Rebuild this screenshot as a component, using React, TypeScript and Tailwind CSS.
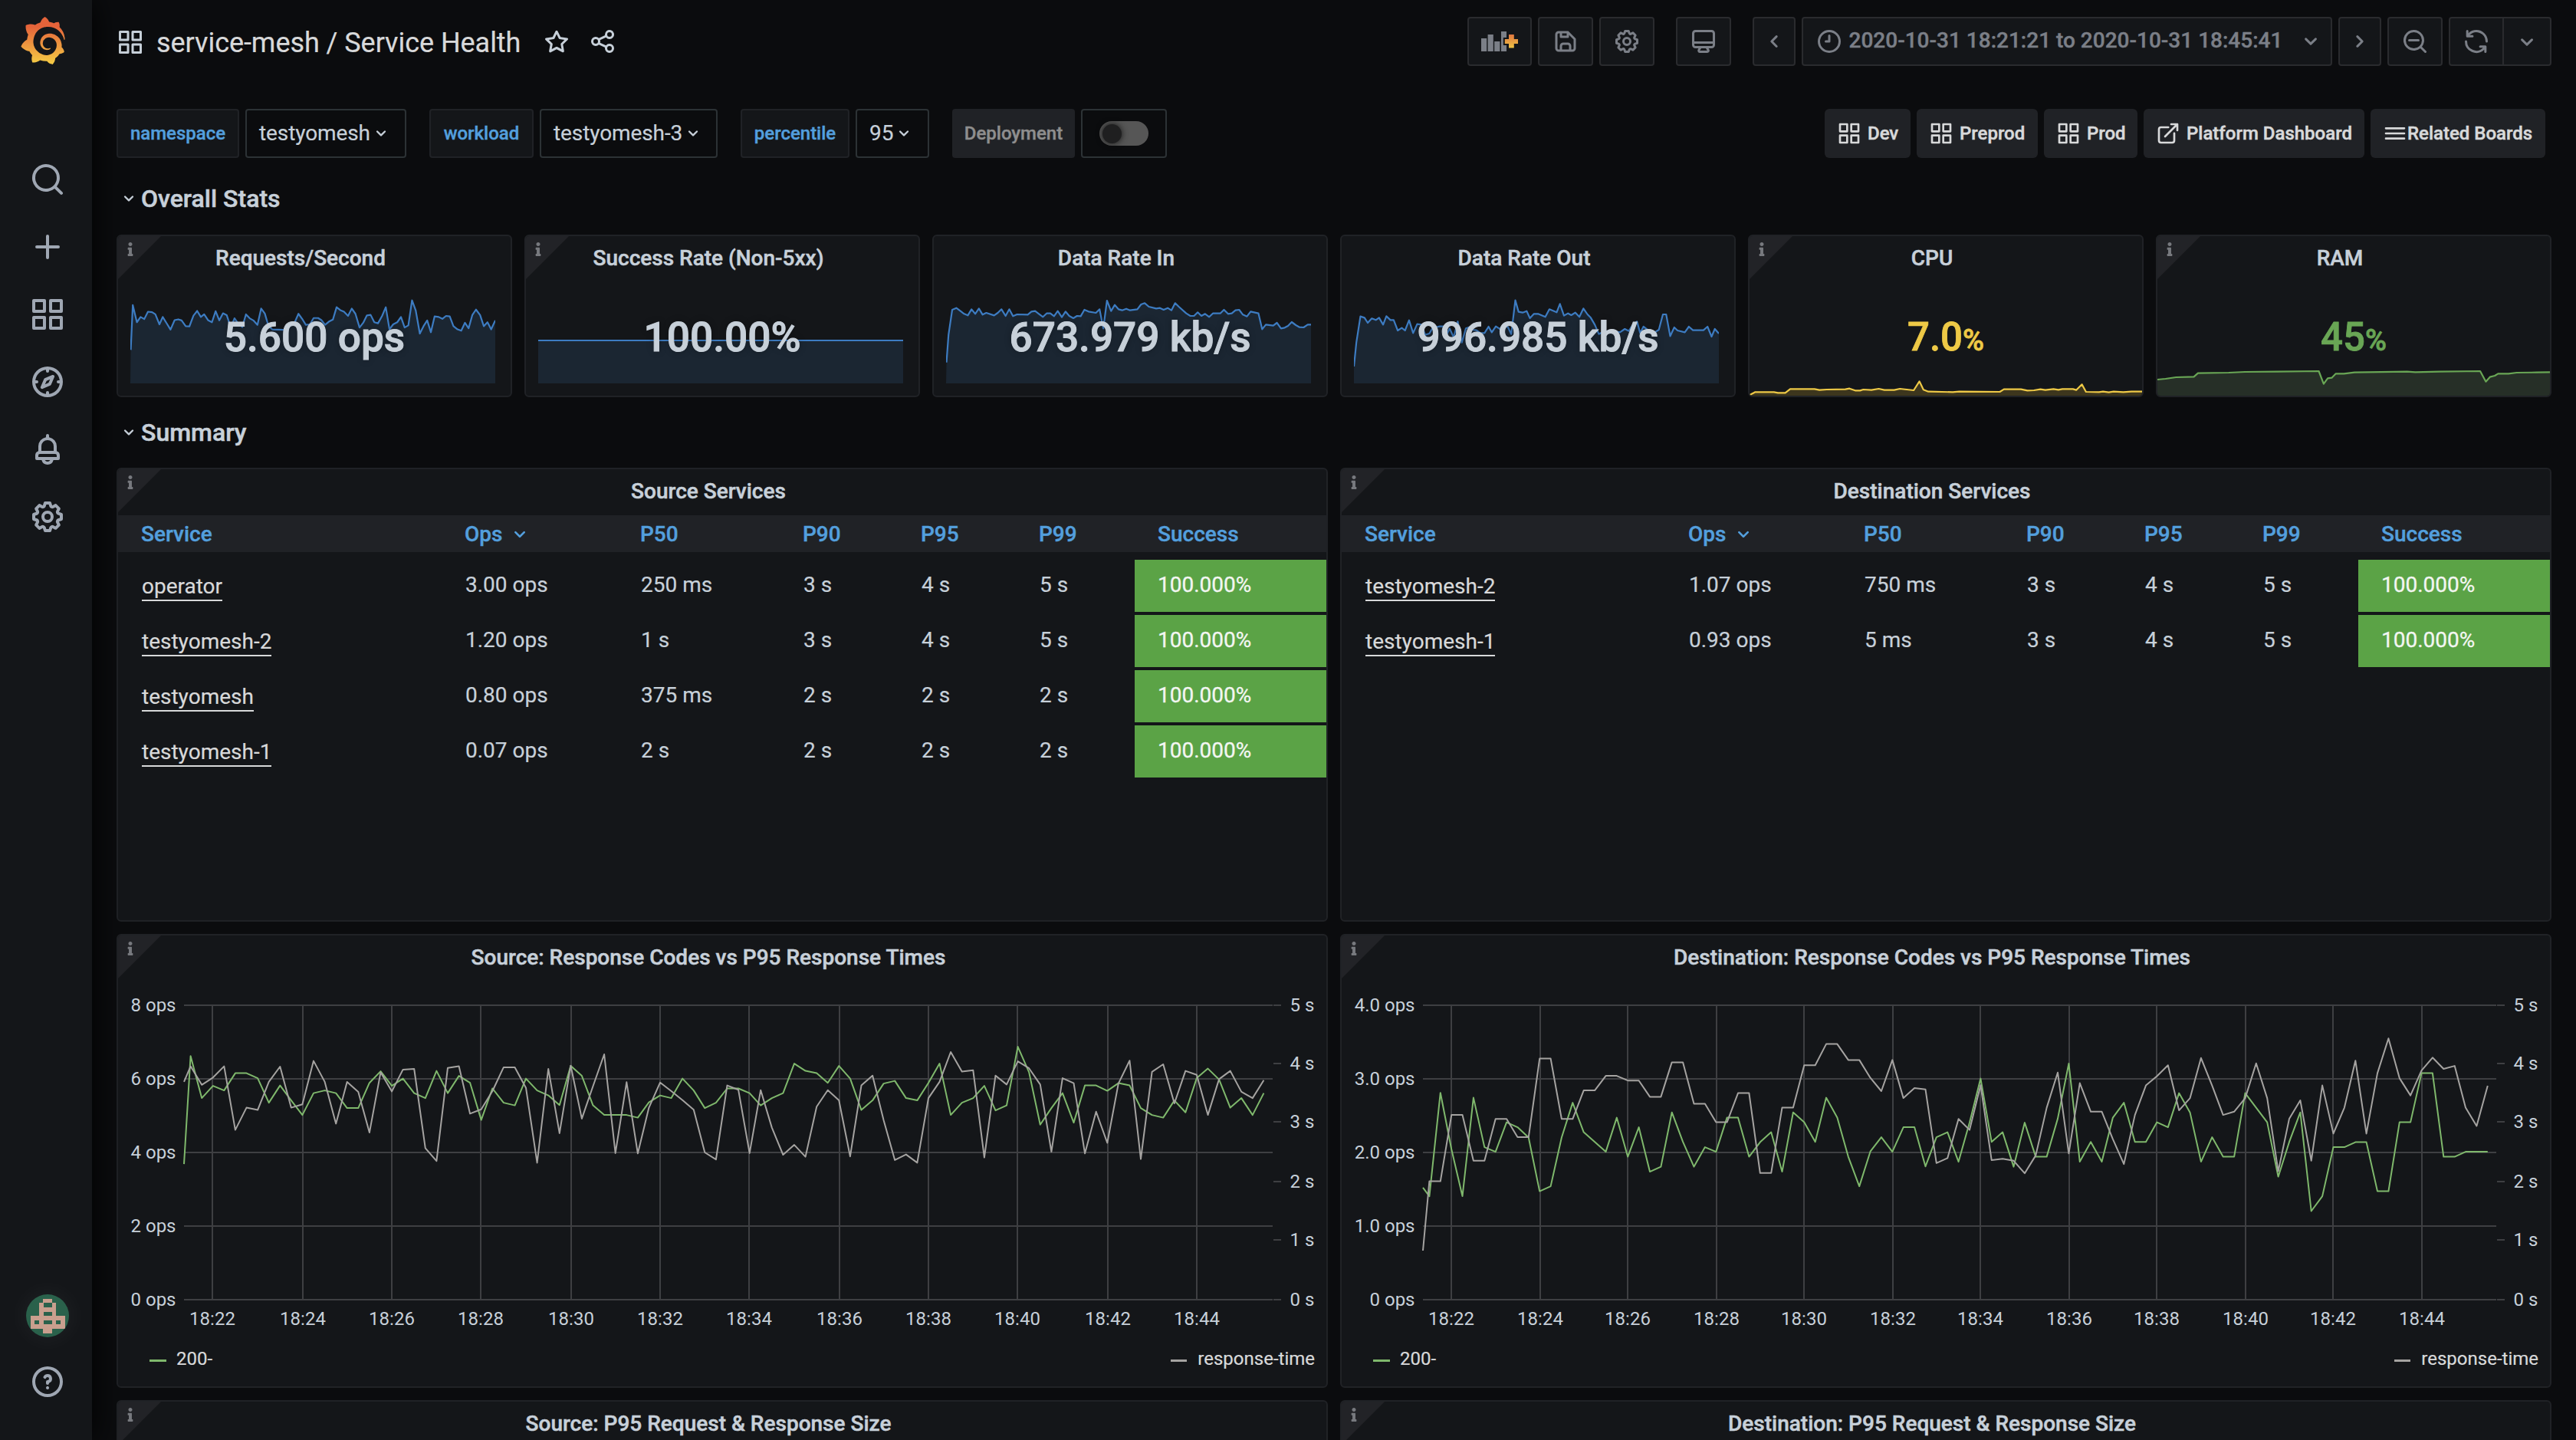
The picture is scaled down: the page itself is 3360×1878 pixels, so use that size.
import React from 'react';
import { SiGrafana } from 'react-icons/si';
import { FaInfo } from 'react-icons/fa';

const ICONS = {
  apps: 'M10,13H3a1,1,0,0,0-1,1v7a1,1,0,0,0,1,1h7a1,1,0,0,0,1-1V14A1,1,0,0,0,10,13ZM9,20H4V15H9ZM21,2H14a1,1,0,0,0-1,1v7a1,1,0,0,0,1,1h7a1,1,0,0,0,1-1V3A1,1,0,0,0,21,2ZM20,9H15V4h5Zm1,4H14a1,1,0,0,0-1,1v7a1,1,0,0,0,1,1h7a1,1,0,0,0,1-1V14A1,1,0,0,0,21,13Zm-1,7H15V15h5ZM10,2H3A1,1,0,0,0,2,3v7a1,1,0,0,0,1,1h7a1,1,0,0,0,1-1V3A1,1,0,0,0,10,2ZM9,9H4V4H9Z',
  search:
    'M21.71,20.29,18,16.61A9,9,0,1,0,16.61,18l3.68,3.68a1,1,0,0,0,1.42,0A1,1,0,0,0,21.71,20.29ZM11,18a7,7,0,1,1,7-7A7,7,0,0,1,11,18Z',
  plus: 'M19,11H13V5a1,1,0,0,0-2,0v6H5a1,1,0,0,0,0,2h6v6a1,1,0,0,0,2,0V13h6a1,1,0,0,0,0-2Z',
  compass:
    'M12,2A10,10,0,1,0,22,12,10,10,0,0,0,12,2Zm1,17.93V19a1,1,0,0,0-2,0v.93A8,8,0,0,1,4.07,13H5a1,1,0,0,0,0-2H4.07A8,8,0,0,1,11,4.07V5a1,1,0,0,0,2,0V4.07A8,8,0,0,1,19.93,11H19a1,1,0,0,0,0,2h.93A8,8,0,0,1,13,19.93ZM15.14,7.55l-5,2.12a1,1,0,0,0-.52.52l-2.12,5a1,1,0,0,0,.21,1.1,1,1,0,0,0,.7.3.93.93,0,0,0,.4-.09l5-2.12a1,1,0,0,0,.52-.52l2.12-5a1,1,0,0,0-1.31-1.31Zm-2.49,5.1-2.28,1,1-2.28,2.28-1Z',
  bell: 'M18,13.18V10a6,6,0,0,0-5-5.91V3a1,1,0,0,0-2,0V4.09A6,6,0,0,0,6,10v3.18A3,3,0,0,0,4,16v2a1,1,0,0,0,1,1H8.14a4,4,0,0,0,7.72,0H19a1,1,0,0,0,1-1V16A3,3,0,0,0,18,13.18ZM8,10a4,4,0,0,1,8,0v3H8Zm4,10a2,2,0,0,1-1.72-1h3.44A2,2,0,0,1,12,20Zm6-3H6V16a1,1,0,0,1,1-1H17a1,1,0,0,1,1,1Z',
  cog: 'M21.32,9.55l-1.89-.63.89-1.78A1,1,0,0,0,20.13,6L18,3.87a1,1,0,0,0-1.15-.19l-1.78.89-.63-1.89A1,1,0,0,0,13.5,2h-3a1,1,0,0,0-.95.68L8.92,4.57,7.14,3.68A1,1,0,0,0,6,3.87L3.87,6a1,1,0,0,0-.19,1.15l.89,1.78-1.89.63A1,1,0,0,0,2,10.5v3a1,1,0,0,0,.68.95l1.89.63-.89,1.78A1,1,0,0,0,3.87,18L6,20.13a1,1,0,0,0,1.15.19l1.78-.89.63,1.89a1,1,0,0,0,.95.68h3a1,1,0,0,0,.95-.68l.63-1.89,1.78.89A1,1,0,0,0,18,20.13L20.13,18a1,1,0,0,0,.19-1.15l-.89-1.78,1.89-.63A1,1,0,0,0,22,13.5v-3A1,1,0,0,0,21.32,9.55ZM20,12.78l-1.2.4A2,2,0,0,0,17.64,16l.57,1.14-1.1,1.1L16,17.64a2,2,0,0,0-2.79,1.16l-.4,1.2H11.22l-.4-1.2A2,2,0,0,0,8,17.64l-1.14.57-1.1-1.1L6.36,16A2,2,0,0,0,5.2,13.18L4,12.78V11.22l1.2-.4A2,2,0,0,0,6.36,8L5.79,6.89l1.1-1.1L8,6.36A2,2,0,0,0,10.82,5.2l.4-1.2h1.56l.4,1.2A2,2,0,0,0,16,6.36l1.14-.57,1.1,1.1L17.64,8a2,2,0,0,0,1.16,2.79l1.2.4ZM12,8a4,4,0,1,0,4,4A4,4,0,0,0,12,8Zm0,6a2,2,0,1,1,2-2A2,2,0,0,1,12,14Z',
  help: 'M11.29,15.29a1.58,1.58,0,0,0-.12.15.76.76,0,0,0-.09.18.64.64,0,0,0-.06.18,1.36,1.36,0,0,0,0,.2.84.84,0,0,0,.08.38.9.9,0,0,0,.54.54.94.94,0,0,0,.76,0,.9.9,0,0,0,.54-.54A1,1,0,0,0,13,16a1,1,0,0,0-.29-.71A1,1,0,0,0,11.29,15.29ZM12,2A10,10,0,1,0,22,12,10,10,0,0,0,12,2Zm0,18a8,8,0,1,1,8-8A8,8,0,0,1,12,20ZM12,7A3,3,0,0,0,9.4,8.5a1,1,0,1,0,1.73,1A1,1,0,0,1,12,9a1,1,0,0,1,0,2,1,1,0,0,0-1,1v1a1,1,0,0,0,2,0v-.18A3,3,0,0,0,12,7Z',
  save: 'M20.71,9.29l-6-6a1,1,0,0,0-.32-.21A1.09,1.09,0,0,0,14,3H6A3,3,0,0,0,3,6V18a3,3,0,0,0,3,3H18a3,3,0,0,0,3-3V10A1,1,0,0,0,20.71,9.29ZM9,5h4V7H9Zm6,14H9V16a1,1,0,0,1,1-1h4a1,1,0,0,1,1,1Zm4-1a1,1,0,0,1-1,1H17V16a3,3,0,0,0-3-3H10a3,3,0,0,0-3,3v3H6a1,1,0,0,1-1-1V6A1,1,0,0,1,6,5H7V8A1,1,0,0,0,8,9h6a1,1,0,0,0,1-1V6.41l4,4Z',
  sync: 'M19.91,15.51H15.38a1,1,0,0,0,0,2h2.4A8,8,0,0,1,4,12a1,1,0,0,0-2,0,10,10,0,0,0,16.88,7.23V21a1,1,0,0,0,2,0V16.5A1,1,0,0,0,19.91,15.51ZM12,2A10,10,0,0,0,5.12,4.77V3a1,1,0,0,0-2,0V7.5a1,1,0,0,0,1,1h4.5a1,1,0,0,0,0-2H6.22A8,8,0,0,1,20,12a1,1,0,0,0,2,0A10,10,0,0,0,12,2Z',
  share:
    'M18,14a4,4,0,0,0-3.08,1.48l-5.1-2.35a3.64,3.64,0,0,0,0-2.26l5.1-2.35A4,4,0,1,0,14,6a4.17,4.17,0,0,0,.07.71L8.79,9.14a4,4,0,1,0,0,5.72l5.28,2.43A4.17,4.17,0,0,0,14,18a4,4,0,1,0,4-4ZM18,4a2,2,0,1,1-2,2A2,2,0,0,1,18,4ZM6,14a2,2,0,1,1,2-2A2,2,0,0,1,6,14Zm12,6a2,2,0,1,1,2-2A2,2,0,0,1,18,20Z',
  star: 'M22,9.67A1,1,0,0,0,21.14,9l-5.69-.83L12.9,3a1,1,0,0,0-1.8,0L8.55,8.16,2.86,9a1,1,0,0,0-.81.68,1,1,0,0,0,.25,1l4.13,4-1,5.68A1,1,0,0,0,6.9,21.44L12,18.77l5.1,2.67a.93.93,0,0,0,.46.12,1,1,0,0,0,.59-.19,1,1,0,0,0,.4-1l-1-5.68,4.13-4A1,1,0,0,0,22,9.67Zm-6.15,4a1,1,0,0,0-.29.88l.72,4.19-3.76-2a1.06,1.06,0,0,0-.94,0l-3.76,2,.72-4.19a1,1,0,0,0-.29-.88l-3-3,4.21-.61a1,1,0,0,0,.76-.55L12,5.7l1.88,3.82a1,1,0,0,0,.76.55l4.21.61Z',
  monitor:
    'M19,2H5A3,3,0,0,0,2,5V15a3,3,0,0,0,3,3H7.64l-.58,1a2,2,0,0,0,0,2,2,2,0,0,0,1.75,1h6.46A2,2,0,0,0,17,21a2,2,0,0,0,0-2l-.59-1H19a3,3,0,0,0,3-3V5A3,3,0,0,0,19,2ZM8.77,20,10,18H14l1.2,2ZM20,15a1,1,0,0,1-1,1H5a1,1,0,0,1-1-1V14H20Zm0-3H4V5A1,1,0,0,1,5,4H19a1,1,0,0,1,1,1Z',
  clock:
    'M12,2A10,10,0,1,0,22,12,10,10,0,0,0,12,2Zm0,18a8,8,0,1,1,8-8A8,8,0,0,1,12,20ZM12,6a1,1,0,0,0-1,1v4H9a1,1,0,0,0,0,2h3a1,1,0,0,0,1-1V7A1,1,0,0,0,12,6Z',
  zoomOut:
    'M21.71,20.29,18,16.61A9,9,0,1,0,16.61,18l3.68,3.68a1,1,0,0,0,1.42,0A1,1,0,0,0,21.71,20.29ZM11,18a7,7,0,1,1,7-7A7,7,0,0,1,11,18Zm4-8H7a1,1,0,0,0,0,2h8a1,1,0,0,0,0-2Z',
  external:
    'M18,10.82a1,1,0,0,0-1,1V19a1,1,0,0,1-1,1H5a1,1,0,0,1-1-1V8A1,1,0,0,1,5,7h7.18a1,1,0,0,0,0-2H5A3,3,0,0,0,2,8V19a3,3,0,0,0,3,3H16a3,3,0,0,0,3-3V11.82A1,1,0,0,0,18,10.82Zm3.92-8.2a1,1,0,0,0-.54-.54A1,1,0,0,0,21,2H15a1,1,0,0,0,0,2h3.59L8.29,14.29a1,1,0,0,0,0,1.42,1,1,0,0,0,1.42,0L20,5.41V9a1,1,0,0,0,2,0V3A1,1,0,0,0,21.92,2.62Z',
  bars: 'M3,8H21a1,1,0,0,0,0-2H3A1,1,0,0,0,3,8Zm18,8H3a1,1,0,0,0,0,2H21a1,1,0,0,0,0-2Zm0-5H3a1,1,0,0,0,0,2H21a1,1,0,0,0,0-2Z',
  down: 'M17,9.17a1,1,0,0,0-1.41,0L12,12.71,8.46,9.17a1,1,0,0,0-1.41,0,1,1,0,0,0,0,1.42l4.24,4.24a1,1,0,0,0,1.42,0L17,10.59A1,1,0,0,0,17,9.17Z',
  left: 'M11.29,12l3.54-3.54a1,1,0,0,0,0-1.41,1,1,0,0,0-1.42,0L9.17,11.29a1,1,0,0,0,0,1.42L13.41,17a1,1,0,0,0,.71.29,1,1,0,0,0,.71-.29,1,1,0,0,0,0-1.41Z',
  right:
    'M14.83,11.29,10.59,7.05a1,1,0,0,0-1.42,0,1,1,0,0,0,0,1.41L12.71,12,9.17,15.54a1,1,0,0,0,0,1.41,1,1,0,0,0,.71.29,1,1,0,0,0,.71-.29l4.24-4.24A1,1,0,0,0,14.83,11.29Z',
};

function Icon({ name, className }: { name: keyof typeof ICONS; className: string }) {
  return (
    <svg viewBox="0 0 24 24" fill="currentColor" className={`shrink-0 ${className}`}>
      <path d={ICONS[name]} />
    </svg>
  );
}

const AVATAR = [
  '..........',
  '....##....',
  '...#..#...',
  '...####...',
  '...#..#...',
  '.########.',
  '.#.#..#.#.',
  '.########.',
  '....##....',
  '..........',
];

function Sidebar() {
  const items: (keyof typeof ICONS)[] = ['search', 'plus', 'apps', 'compass', 'bell', 'cog'];
  return (
    <aside className="relative z-10 flex h-full w-[120px] shrink-0 flex-col items-center bg-[#141619] pl-[4px] text-[#9fa7b3] shadow-[0_0_40px_#000]">
      <svg className="h-0 w-0">
        <defs>
          <linearGradient id="logo" x1="0" y1="0" x2="0" y2="1">
            <stop offset="0.2" stopColor="#e5633a" />
            <stop offset="0.95" stopColor="#f3c644" />
          </linearGradient>
        </defs>
      </svg>
      <SiGrafana className="mt-[22px] mr-[12px] h-[62px] w-[62px]" fill="url(#logo)" />
      <nav className="mt-[126px] flex flex-col gap-[40px]">
        {items.map((n) => (
          <Icon key={n} name={n} className="h-[48px] w-[48px]" />
        ))}
      </nav>
      <div className="mt-auto mb-[52px] flex flex-col items-center gap-[34px]">
        <svg viewBox="0 0 10 10" shapeRendering="crispEdges" className="h-[56px] w-[56px] rounded-full bg-[#2a614b] shadow-[0_0_28px_6px_rgba(255,255,255,0.04)]">
          {AVATAR.flatMap((row, y) =>
            row.split('').map((c, x) => (c === '#' ? <rect key={`${x}-${y}`} x={x} y={y} width="1.02" height="1.02" fill="#c99f8e" /> : null)),
          )}
        </svg>
        <Icon name="help" className="h-[48px] w-[48px]" />
      </div>
    </aside>
  );
}

const BTN = 'flex h-[64px] items-center justify-center rounded-[4px] border-2 border-[#2a2b2e] bg-[#141619] text-[#7b7f87]';

function Header() {
  return (
    <header className="flex h-[64px] shrink-0 items-center justify-between">
      <div className="flex items-center text-[#c7d0d9]">
        <Icon name="apps" className="mt-[2px] h-[36px] w-[36px]" />
        <h1 className="ml-[16px] w-[476px] whitespace-nowrap pt-[3px] text-[36px] leading-[44px] tracking-[-0.05px] text-[#d8d9da]">
          service-mesh / Service Health
        </h1>
        <Icon name="star" className="ml-[28px] h-[36px] w-[36px]" />
        <Icon name="share" className="ml-[24px] h-[36px] w-[36px]" />
      </div>
      <div className="flex gap-[8px]">
        <div className={`${BTN} w-[84px]`}>
          <svg viewBox="0 0 48 26" className="h-[26px] w-[48px]" fill="currentColor">
            <defs>
              <linearGradient id="add" x1="0" y1="0" x2="0" y2="1">
                <stop offset="0" stopColor="#e0763f" />
                <stop offset="1" stopColor="#efc445" />
              </linearGradient>
            </defs>
            <path d="M0 9h7.200v17H0zM8.600 4h7.200v22H8.600zM17.200 13h7.200v13h-7.200zM26 0h7v26h-7z" />
            <path d="M36 4h6.800v6h5.200v6h-5.200v5.600H36V16h-5.200v-6H36z" stroke="#141619" strokeWidth="4" />
            <path d="M36 4h6.800v6h5.200v6h-5.200v5.600H36V16h-5.200v-6H36z" fill="url(#add)" />
          </svg>
        </div>
        <div className={`${BTN} w-[72px]`}>
          <Icon name="save" className="h-[36px] w-[36px]" />
        </div>
        <div className={`${BTN} w-[72px]`}>
          <Icon name="cog" className="h-[36px] w-[36px]" />
        </div>
        <div className={`${BTN} mx-[20px] w-[72px]`}>
          <Icon name="monitor" className="h-[36px] w-[36px]" />
        </div>
        <div className={`${BTN} w-[56px]`}>
          <Icon name="left" className="h-[36px] w-[36px]" />
        </div>
        <div className={`${BTN} w-[692px] pl-[7px] text-[28px] font-medium`}>
          <Icon name="clock" className="h-[36px] w-[36px]" />
          <span className="ml-[8px] w-[562px] whitespace-nowrap pb-[2px] [-webkit-text-stroke:0.4px]">2020-10-31 18:21:21 to 2020-10-31 18:45:41</span>
          <Icon name="down" className="ml-[22px] h-[36px] w-[36px]" />
        </div>
        <div className={`${BTN} w-[56px]`}>
          <Icon name="right" className="h-[36px] w-[36px]" />
        </div>
        <div className={`${BTN} w-[72px]`}>
          <Icon name="zoomOut" className="h-[36px] w-[36px]" />
        </div>
        <div className={`${BTN} w-[134px]`}>
          <div className="flex h-full flex-1 items-center justify-center border-r-2 border-[#2a2b2e]">
            <Icon name="sync" className="h-[36px] w-[36px]" />
          </div>
          <div className="flex h-full w-[60px] items-center justify-center pt-[2px]">
            <Icon name="down" className="h-[36px] w-[36px]" />
          </div>
        </div>
      </div>
    </header>
  );
}

function VarLabel({ text, w }: { text: string; w: string }) {
  return (
    <div className={`flex h-[64px] items-center justify-center rounded-[4px] border-2 border-[#202226] bg-[#141619] text-[24px] font-medium text-[#539fdd] [-webkit-text-stroke:0.4px] ${w}`}>
      {text}
    </div>
  );
}

function VarSelect({ text, w }: { text: string; w: string }) {
  return (
    <div className={`ml-[8px] mr-[30px] flex h-[64px] items-center rounded-[4px] border-2 border-[#2c3235] bg-[#0b0c0e] pl-[16px] text-[28px] tracking-[-0.1px] text-[#c7d0d9] ${w}`}>
      {text}
      <Icon name="down" className="h-[28px] w-[28px]" />
    </div>
  );
}

function DashLink({ icon, text, w, tight }: { icon: keyof typeof ICONS; text: string; w: string; tight?: boolean }) {
  return (
    <div className={`flex h-[64px] items-center rounded-[6px] bg-[#202226] pl-[16px] text-[24px] font-medium whitespace-nowrap text-[#d8d9da] [-webkit-text-stroke:0.5px] ${w}`}>
      <Icon name={icon} className={tight ? 'h-[32px] w-[32px]' : 'mr-[8px] h-[32px] w-[32px]'} />
      {text}
    </div>
  );
}

function SubMenu() {
  return (
    <div className="mt-[56px] flex h-[64px] shrink-0 justify-between pr-[8px]">
      <div className="flex">
        <VarLabel text="namespace" w="w-[160px]" />
        <VarSelect text="testyomesh" w="w-[210px]" />
        <VarLabel text="workload" w="w-[136px]" />
        <VarSelect text="testyomesh-3" w="w-[232px]" />
        <VarLabel text="percentile" w="w-[142px]" />
        <VarSelect text="95" w="w-[96px]" />
        <div className="flex h-[64px] w-[160px] items-center justify-center rounded-[4px] bg-[#202226] text-[24px] font-medium text-[#8e8e8e] [-webkit-text-stroke:0.4px]">
          Deployment
        </div>
        <div className="ml-[8px] flex h-[64px] w-[112px] items-center justify-center rounded-[4px] border-2 border-[#2c3235]">
          <div className="flex h-[32px] w-[64px] items-center rounded-full bg-[#565656] pl-[4px]">
            <div className="h-[25px] w-[25px] rounded-full bg-[#1f1f20] shadow-[0_0_8px_rgba(0,0,0,0.8)]" />
          </div>
        </div>
      </div>
      <div className="flex gap-[8px]">
        <DashLink icon="apps" text="Dev" w="w-[112px]" />
        <DashLink icon="apps" text="Preprod" w="w-[158px]" />
        <DashLink icon="apps" text="Prod" w="w-[122px]" />
        <DashLink icon="external" text="Platform Dashboard" w="w-[288px]" />
        <DashLink icon="bars" text="Related Boards" w="w-[228px]" tight />
      </div>
    </div>
  );
}

function RowTitle({ text, className }: { text: string; className: string }) {
  return (
    <div className={`flex shrink-0 items-center pl-[2px] text-[32px] font-medium text-[#c7d0d9] [-webkit-text-stroke:0.5px] ${className}`}>
      <Icon name="down" className="mr-[2px] h-[28px] w-[28px]" />
      {text}
    </div>
  );
}

function Panel({ title, info = true, className, children }: { title: string; info?: boolean; className: string; children?: React.ReactNode }) {
  return (
    <section className={`relative flex flex-col overflow-hidden rounded-[6px] border-2 border-[#202226] bg-[#141619] ${className}`}>
      {info && (
        <div className="absolute left-0 top-0 h-[56px] w-[56px] bg-[#222327] pl-[10px] pt-[8px] text-[#77797e] [clip-path:polygon(0_0,100%_0,0_100%)]">
          <FaInfo className="h-[18px] w-[12px]" />
        </div>
      )}
      <h2 className="h-[56px] shrink-0 pr-[36px] text-center text-[28px] leading-[58px] font-medium text-[#c7d0d9] [-webkit-text-stroke:0.5px]">{title}</h2>
      {children}
    </section>
  );
}

const SPARK = {
  rps: '318,1325 323,1155 333,1220 342,1200 351,1208 360,1180 370,1182 378,1190 388,1228 396,1200 406,1225 415,1248 425,1212 434,1209 442,1213 452,1235 461,1236 471,1195 480,1177 489,1200 497,1190 507,1213 516,1220 525,1178 534,1213 543,1186 552,1193 562,1240 571,1205 580,1225 590,1238 599,1190 608,1205 617,1213 627,1230 636,1168 645,1187 654,1235 663,1247 690,1249 700,1245 710,1225 718,1220 727,1188 736,1207 745,1230 755,1228 764,1204 775,1204 783,1212 792,1230 801,1218 811,1210 820,1163 829,1174 838,1180 848,1196 857,1168 866,1188 876,1240 885,1222 894,1194 903,1192 912,1220 921,1224 931,1196 940,1163 949,1247 958,1228 968,1220 977,1200 986,1240 995,1232 1004,1137 1013,1175 1023,1263 1032,1235 1041,1213 1050,1258 1059,1198 1069,1200 1078,1207 1087,1196 1096,1198 1105,1235 1115,1247 1124,1252 1133,1222 1142,1243 1151,1193 1160,1172 1170,1193 1179,1235 1188,1220 1197,1247 1207,1213',
  success: '0,45 100,45',
  rateIn:
    '736,1118 741,1010 750,912 760,905 770,917 779,928 788,934 797,910 806,928 815,907 824,931 833,924 852,934 861,924 870,910 880,936 889,910 898,937 908,930 934,931 943,919 952,917 961,928 971,940 980,926 989,926 998,937 1007,917 1017,941 1026,919 1035,936 1045,945 1054,936 1063,937 1072,912 1082,919 1100,924 1109,910 1118,985 1127,876 1137,917 1146,893 1155,910 1164,914 1174,908 1183,914 1201,910 1210,891 1219,886 1229,900 1247,907 1256,905 1265,912 1275,905 1284,914 1293,886 1302,900 1320,926 1330,936 1339,936 1348,922 1357,936 1366,928 1376,940 1385,926 1403,926 1412,912 1422,928 1431,926 1440,914 1449,912 1458,931 1468,938 1477,919 1496,926 1505,988 1514,970 1532,974 1541,963 1551,985 1560,982 1568,975 1577,960 1587,972 1596,980 1606,981 1616,970 1624,970',
  rateOut:
    '62,594 65,500 70,398 75,403 79,423 84,406 89,412 93,403 98,430 102,397 107,412 111,412 116,453 121,443 125,453 130,413 135,463 140,428 145,430 150,470 155,465 159,443 168,437 172,437 177,465 180,445 185,480 190,418 195,500 200,445 204,440 208,450 213,452 218,463 223,463 228,438 232,460 237,437 242,447 247,435 252,440 256,467 261,335 265,380 270,383 275,377 279,405 284,388 289,388 298,400 303,370 312,382 316,349 321,395 326,386 330,393 335,383 340,400 345,367 350,390 354,403 359,430 364,467 370,457 378,455 384,457 390,460 396,447 401,455 406,430 411,418 415,463 419,438 424,450 433,460 438,450 443,390 447,390 452,475 457,441 461,453 470,460 475,438 480,452 493,452 498,438 503,477 507,447 512,465',
  cpu: '550,706 557,694 580,694 585,697 594,697 600,682 630,682 636,686 645,684 668,683 673,680 680,688 686,688 690,684 700,686 709,681 716,686 728,686 735,681 752,687 759,652 764,685 770,692 800,694 808,692 858,693 863,683 884,683 892,688 900,687 908,683 914,686 924,682 930,685 935,682 948,682 952,686 959,664 964,693 980,694 985,692 992,695 998,692 1010,694 1020,692 1033,692',
  ram: '1052,645 1062,642 1075,636 1097,634 1102,620 1140,618 1160,615 1200,614 1251,612 1257,662 1262,640 1267,638 1272,622 1282,622 1295,617 1360,614 1370,616 1400,614 1450,612 1457,653 1462,635 1468,630 1472,622 1485,622 1495,618 1520,617 1536,616',
};

// box is [left, top, width, height] in the units of the points
function Spark({ points, box, stroke, fill, className }: { points: string; box: [number, number, number, number]; stroke: string; fill: string; className: string }) {
  const [x, y, w, h] = box;
  const base = y + h;
  return (
    <svg viewBox={box.join(' ')} preserveAspectRatio="none" className={className}>
      <polygon points={`${x},${base} ${points} ${x + w},${base}`} fill={fill} />
      <polyline points={points} fill="none" stroke={stroke} strokeWidth="2.2" vectorEffect="non-scaling-stroke" strokeLinejoin="round" />
    </svg>
  );
}

function BlueStat({ title, info, value, points, box }: { title: string; info?: boolean; value: string; points: string; box: [number, number, number, number] }) {
  return (
    <Panel title={title} info={info ?? false} className="h-[212px] flex-1">
      <div className="relative mx-[16px] mb-[16px] flex-1">
        <Spark points={points} box={box} stroke="#3d7cc2" fill="#1b2632" className="absolute bottom-0 left-0 h-[121px] w-[476px]" />
        <div className="relative pt-[43px] text-center text-[53.2px] leading-[66px] font-medium whitespace-nowrap text-[#c7d0d9] [-webkit-text-stroke:1px] [text-shadow:0_0_8px_rgba(0,0,0,0.35)]">
          {value}
        </div>
      </div>
    </Panel>
  );
}

function GaugeStat({ title, value, color, children }: { title: string; value: string; color: string; children: React.ReactNode }) {
  return (
    <Panel title={title} className="h-[212px] flex-1">
      <div className="relative flex-1">
        {children}
        <div className={`relative pt-[43px] text-center text-[51px] leading-[66px] font-medium [-webkit-text-stroke:0.8px] ${color}`}>
          {value}
          <span className="text-[38px]">%</span>
        </div>
      </div>
    </Panel>
  );
}

function Stats() {
  return (
    <div className="flex shrink-0 gap-[16px]">
      <BlueStat title="Requests/Second" info value="5.600 ops" points={SPARK.rps} box={[317, 1100, 890, 352]} />
      <BlueStat title="Success Rate (Non-5xx)" info value="100.00%" points={SPARK.success} box={[0, -20, 100, 121]} />
      <BlueStat title="Data Rate In" value="673.979 kb/s" points={SPARK.rateIn} box={[735, 837, 889, 363]} />
      <BlueStat title="Data Rate Out" value="996.985 kb/s" points={SPARK.rateOut} box={[62, 297, 450, 363]} />
      <GaugeStat title="CPU" value="7.0" color="text-[#eec946]">
        <Spark points={SPARK.cpu} box={[550, 588, 483, 120]} stroke="#eec946" fill="#3d361d" className="absolute bottom-0 left-0 h-[40px] w-full" />
      </GaugeStat>
      <GaugeStat title="RAM" value="45" color="text-[#69a655]">
        <Spark points={SPARK.ram} box={[1052, 588, 484, 120]} stroke="#69a655" fill="#262f27" className="absolute bottom-0 left-0 h-[40px] w-full" />
      </GaugeStat>
    </div>
  );
}

const COLS = 'grid grid-cols-[422px_229px_212px_154px_154px_155px_250px]';

function ServiceTable({ title, rows }: { title: string; rows: string[][] }) {
  return (
    <Panel title={title} className="h-[592px] w-[1580px]">
      <div className={`${COLS} mt-[4px] h-[48px] shrink-0 items-center bg-[#202226] text-[28px] font-medium text-[#539fdd] [-webkit-text-stroke:0.4px]`}>
        {['Service', 'Ops', 'P50', 'P90', 'P95', 'P99', 'Success'].map((h) => (
          <div key={h} className="flex items-center pl-[30px] pt-[1px] leading-[48px]">
            {h}
            {h === 'Ops' && <Icon name="down" className="ml-[7px] h-[32px] w-[32px]" />}
          </div>
        ))}
      </div>
      <div className="mt-[10px] flex flex-col gap-[4px] text-[28px] text-[#c7d0d9]">
        {rows.map((r) => (
          <div key={r[0]} className={`${COLS} h-[68px] leading-[66px]`}>
            {r.map((c, i) =>
              i === 0 ? (
                <div key={i} className="flex items-center pb-[1px] pl-[31px] text-[#d8d9da]">
                  <span className="border-b-2 border-[#d8d9da] pt-[4px] leading-[34px]">{c}</span>
                </div>
              ) : (
                <div key={i} className={i === 6 ? 'bg-[#5ba346] pl-[30px] text-[#f3f6f2] [-webkit-text-stroke:0.3px]' : 'pl-[31px]'}>
                  {c}
                </div>
              ),
            )}
          </div>
        ))}
      </div>
    </Panel>
  );
}

const SRC_CODES = [
  735, 409, 536, 499, 513, 461, 461, 476, 550, 498, 543, 587, 521, 513, 521, 566, 566, 490, 455, 499, 477, 521, 536, 454, 521, 469, 490, 602, 507, 550, 558, 477,
  513, 528, 557, 439, 469, 558, 587, 587, 587, 595, 549, 528, 536, 477, 513, 566, 550, 507, 507, 521, 558, 536, 521, 432, 454, 461, 490, 439, 477, 572, 543, 492,
  484, 536, 543, 490, 432, 587, 550, 536, 499, 573, 558, 381, 458, 616, 566, 521, 610, 498, 498, 514, 491, 498, 566, 587, 595, 543, 579, 476, 447, 480, 565, 536,
  587, 521,
];
const SRC_TIMES = [
  487, 440, 496, 474, 440, 632, 565, 572, 487, 441, 565, 555, 424, 487, 613, 487, 517, 640, 458, 516, 450, 448, 687, 726, 445, 440, 583, 570, 515, 443, 443, 505,
  731, 448, 642, 438, 598, 500, 404, 702, 488, 703, 565, 489, 515, 542, 571, 700, 721, 498, 511, 702, 512, 625, 707, 677, 713, 562, 512, 543, 712, 498, 468, 603,
  723, 706, 731, 536, 487, 397, 456, 452, 715, 468, 495, 425, 446, 495, 698, 476, 491, 703, 577, 671, 492, 423, 720, 457, 434, 552, 454, 466, 587, 479, 454, 517,
  536, 482,
];
const DST_CODES = [
  806, 832, 520, 690, 832, 535, 684, 698, 609, 624, 655, 817, 802, 655, 550, 639, 668, 698, 595, 713, 624, 758, 743, 579, 668, 743, 684, 698, 595, 595, 713, 669,
  639, 758, 579, 609, 668, 535, 595, 713, 802, 697, 654, 698, 624, 624, 742, 654, 639, 728, 610, 477, 668, 639, 743, 610, 713, 713, 598, 432, 728, 668, 728, 595,
  550, 668, 668, 609, 624, 521, 580, 728, 654, 713, 713, 521, 565, 609, 773, 668, 579, 877, 832, 684, 684, 669, 669, 817, 817, 609, 609, 461, 461, 713, 713, 698,
  698, 698,
];
const DST_TIMES = [
  996, 787, 787, 587, 587, 725, 725, 599, 599, 654, 654, 417, 417, 599, 599, 513, 513, 469, 469, 483, 483, 532, 532, 428, 428, 553, 553, 609, 609, 521, 521, 762,
  762, 565, 565, 437, 437, 373, 373, 421, 421, 475, 515, 421, 536, 506, 510, 732, 717, 599, 632, 497, 723, 719, 725, 763, 709, 565, 459, 703, 491, 577, 577, 660,
  735, 587, 498, 470, 437, 573, 536, 415, 498, 587, 577, 536, 431, 536, 757, 598, 543, 725, 498, 643, 565, 423, 643, 461, 356, 476, 528, 453, 414, 448, 439, 565,
  620, 499,
];

const PLOT_TOP = 35;
const PLOT_BOTTOM = 419;
const RIGHT_AXIS = [0, 76, 152, 230, 306, 384];

// raw samples run from 256 (top of the axis) to 1144 (zero)
const toY = (v: number) => PLOT_TOP + ((v - 256) / 888) * (PLOT_BOTTOM - PLOT_TOP);

type GraphProps = {
  title: string;
  left: number;
  right: number;
  second: number;
  last: number;
  yLabels: string[];
  ticks: number[];
  codes: number[];
  times: number[];
};

function Graph({ title, left, right, second, last, yLabels, ticks, codes, times }: GraphProps) {
  const step = (last - second) / (codes.length - 2);
  const line = (data: number[]) => data.map((v, i) => `${(i === 0 ? left : second + step * (i - 1)).toFixed(1)},${toY(v).toFixed(1)}`).join(' ');
  return (
    <Panel title={title} className="h-[592px] w-[1580px]">
      <svg viewBox="0 0 1576 460" className="h-[460px] w-[1576px] shrink-0 text-[24px]" fill="#c7d0d9">
        <g fill="#3e3f42">
          {yLabels.map((l, i) => (
            <rect key={l} x={left} y={PLOT_TOP - 1 + i * 96} width={right - left} height="2" />
          ))}
          {ticks.map((x) => (
            <rect key={x} x={x - 1} y={PLOT_TOP} width="2" height={PLOT_BOTTOM - PLOT_TOP} />
          ))}
          {RIGHT_AXIS.map((y) => (
            <rect key={y} x={right + 1} y={PLOT_TOP - 1 + y} width="10" height="2" />
          ))}
        </g>
        <g className="[-webkit-text-stroke:0.3px]">
          {yLabels.map((l, i) => (
            <text key={l} x={left - 10.5} y={PLOT_TOP + 8 + i * 96} textAnchor="end">
              {l}
            </text>
          ))}
          {RIGHT_AXIS.map((y, i) => (
            <text key={y} x={right + 22.5} y={PLOT_TOP + 8 + y}>
              {5 - i} s
            </text>
          ))}
          {ticks.map((x, i) => (
            <text key={x} x={x} y={452} textAnchor="middle">
              18:{22 + i * 2}
            </text>
          ))}
        </g>
        <g fill="none" strokeWidth="2" strokeLinejoin="round">
          <polyline points={line(codes)} stroke="#7fb86c" />
          <polyline points={line(times)} stroke="#a5a3a1" />
        </g>
      </svg>
      <div className="flex h-[72px] items-center justify-between pl-[41px] pr-[15px] text-[24px] text-[#d8d9da]">
        <div className="flex items-center">
          <i className="mt-[4px] mr-[13px] h-[3px] w-[22px] bg-[#7fb86c]" />
          200-
        </div>
        <div className="flex items-center">
          <i className="mt-[4px] mr-[14px] h-[3px] w-[21px] bg-[#a5a3a1]" />
          response-time
        </div>
      </div>
    </Panel>
  );
}

export default function App() {
  return (
    <div className="flex h-[1878px] w-[3360px] overflow-hidden bg-[#0b0c0e] font-['Roboto',sans-serif] [-webkit-text-stroke:0.2px]">
      <Sidebar />
      <main className="flex h-[1878px] w-[3240px] flex-col overflow-hidden px-[32px] pt-[22px]">
        <Header />
        <SubMenu />
        <RowTitle text="Overall Stats" className="h-[100px] pt-[6px]" />
        <Stats />
        <RowTitle text="Summary" className="h-[92px] pb-[1px]" />
        <div className="grid shrink-0 grid-cols-2 gap-[16px]">
          <ServiceTable
            title="Source Services"
            rows={[
              ['operator', '3.00 ops', '250 ms', '3 s', '4 s', '5 s', '100.000%'],
              ['testyomesh-2', '1.20 ops', '1 s', '3 s', '4 s', '5 s', '100.000%'],
              ['testyomesh', '0.80 ops', '375 ms', '2 s', '2 s', '2 s', '100.000%'],
              ['testyomesh-1', '0.07 ops', '2 s', '2 s', '2 s', '2 s', '100.000%'],
            ]}
          />
          <ServiceTable
            title="Destination Services"
            rows={[
              ['testyomesh-2', '1.07 ops', '750 ms', '3 s', '4 s', '5 s', '100.000%'],
              ['testyomesh-1', '0.93 ops', '5 ms', '3 s', '4 s', '5 s', '100.000%'],
            ]}
          />
          <Graph
            title="Source: Response Codes vs P95 Response Times"
            left={86}
            right={1506}
            second={94.6}
            last={1494.4}
            yLabels={['8 ops', '6 ops', '4 ops', '2 ops', '0 ops']}
            ticks={[123, 241, 357, 473, 591, 707, 823, 941, 1057, 1173, 1291, 1407]}
            codes={SRC_CODES}
            times={SRC_TIMES}
          />
          <Graph
            title="Destination: Response Codes vs P95 Response Times"
            left={106}
            right={1506}
            second={114.4}
            last={1494.8}
            yLabels={['4.0 ops', '3.0 ops', '2.0 ops', '1.0 ops', '0 ops']}
            ticks={[143, 259, 373, 489, 603, 719, 833, 949, 1063, 1179, 1293, 1409]}
            codes={DST_CODES}
            times={DST_TIMES}
          />
          <Panel title="Source: P95 Request & Response Size" className="h-[592px] w-[1580px]" />
          <Panel title="Destination: P95 Request & Response Size" className="h-[592px] w-[1580px]" />
        </div>
      </main>
    </div>
  );
}
